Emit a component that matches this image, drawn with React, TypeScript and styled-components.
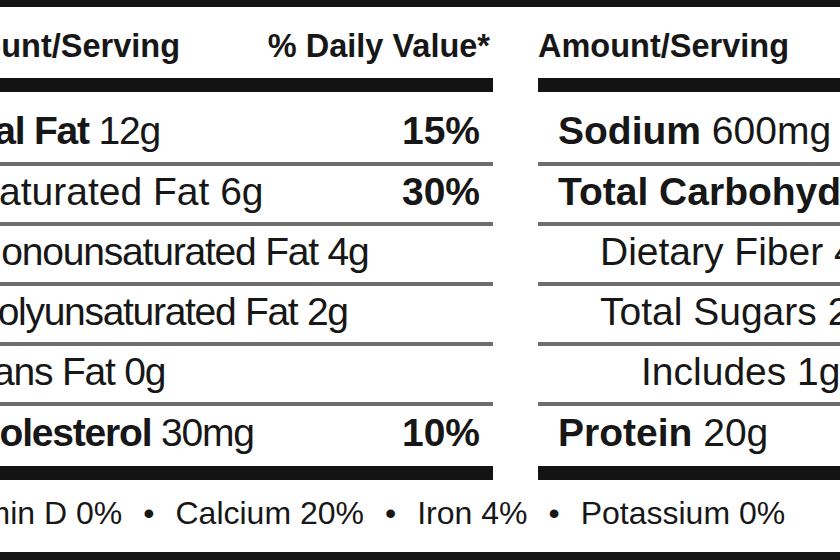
import React from "react";
import styled, { createGlobalStyle } from "styled-components";

const GlobalStyle = createGlobalStyle`
  html, body {
    margin: 0;
    padding: 0;
    background: #ffffff;
  }
  body {
    font-family: "Liberation Sans", Arial, Helvetica, sans-serif;
    color: #171717;
  }
`;

const Page = styled.div`
  width: 840px;
  height: 560px;
  overflow: hidden;
  background: #ffffff;
`;

const Label = styled.div`
  margin-left: -71px;
  width: 1173px;
  border-top: 7px solid #151515;
  border-bottom: 8px solid #151515;
`;

const Columns = styled.div`
  display: grid;
  grid-template-columns: 564px 564px;
  column-gap: 45px;
`;

const Column = styled.section`
  display: flex;
  flex-direction: column;
`;

const HeaderRow = styled.div`
  display: flex;
  justify-content: space-between;
  align-items: flex-start;
  box-sizing: border-box;
  height: 71px;
  padding: 23px 3px 0 0;
  font-size: 32.5px;
  line-height: 32px;
  font-weight: 700;
  white-space: nowrap;
`;

const ThickRule = styled.div`
  height: 14px;
  background: #131313;
`;

type Pos = "first" | "middle" | "last";

const Row = styled.div<{ $indent: number; $pos: Pos }>`
  display: flex;
  justify-content: space-between;
  align-items: flex-start;
  box-sizing: border-box;
  white-space: nowrap;
  font-size: 39px;
  line-height: 39px;
  padding-left: ${(p) => p.$indent}px;
  padding-right: 13px;
  height: ${(p) => (p.$pos === "first" ? 74 : 60)}px;
  padding-top: ${(p) => (p.$pos === "first" ? 19 : p.$pos === "last" ? 7 : 6)}px;
  border-bottom: ${(p) => (p.$pos === "last" ? "none" : "4px solid #6e6e6e")};
`;

const Label_ = styled.span<{ $tracking: number }>`
  letter-spacing: ${(p) => p.$tracking}px;
`;

const Name = styled.span<{ $bold?: boolean }>`
  font-weight: ${(p) => (p.$bold ? 700 : 400)};
`;

const Amount = styled.span`
  font-weight: 400;
`;

const Percent = styled.span`
  font-weight: 700;
`;

const VitaminRow = styled.div`
  display: flex;
  align-items: flex-start;
  box-sizing: border-box;
  height: 72px;
  padding-top: 17px;
  font-size: 32px;
  line-height: 32px;
  white-space: nowrap;
`;

const Bullet = styled.span`
  margin: 0 21px;
`;

type Item = {
  name: string;
  bold?: boolean;
  amount: string;
  dv?: string;
  indent: number;
  tracking?: number;
};

const leftItems: Item[] = [
  { name: "Total Fat", bold: true, amount: "12g", dv: "15%", indent: 11, tracking: -1.2 },
  { name: "Saturated Fat", amount: "6g", dv: "30%", indent: 44 },
  { name: "Monounsaturated Fat", amount: "4g", indent: 41, tracking: -1.2 },
  { name: "Polyunsaturated Fat", amount: "2g", indent: 44, tracking: -1.3 },
  { name: "Trans Fat", amount: "0g", indent: 31, tracking: -1.2 },
  { name: "Cholesterol", bold: true, amount: "30mg", dv: "10%", indent: 21, tracking: -1.2 },
];

const rightItems: Item[] = [
  { name: "Sodium", bold: true, amount: "600mg", dv: "26%", indent: 20 },
  { name: "Total Carbohydrate", bold: true, amount: "15g", dv: "5%", indent: 20 },
  { name: "Dietary Fiber", amount: "4g", dv: "14%", indent: 62 },
  { name: "Total Sugars", amount: "2g", indent: 62 },
  { name: "Includes", amount: "1g Added Sugars", dv: "2%", indent: 103 },
  { name: "Protein", bold: true, amount: "20g", indent: 20 },
];

const vitamins = ["Vitamin D 0%", "Calcium 20%", "Iron 4%", "Potassium 0%"];

function NutrientColumn({ items }: { items: Item[] }) {
  return (
    <Column>
      <HeaderRow>
        <span>Amount/Serving</span>
        <span>% Daily Value*</span>
      </HeaderRow>
      <ThickRule />
      {items.map((it, i) => (
        <Row
          key={it.name}
          $indent={it.indent}
          $pos={i === 0 ? "first" : i === items.length - 1 ? "last" : "middle"}
        >
          <Label_ $tracking={it.tracking ?? 0}>
            <Name $bold={it.bold}>{it.name}</Name> <Amount>{it.amount}</Amount>
          </Label_>
          {it.dv ? <Percent>{it.dv}</Percent> : null}
        </Row>
      ))}
      <ThickRule />
    </Column>
  );
}

export default function App() {
  return (
    <>
      <GlobalStyle />
      <Page>
        <Label>
          <Columns>
            <NutrientColumn items={leftItems} />
            <NutrientColumn items={rightItems} />
          </Columns>
          <VitaminRow>
            {vitamins.map((v, i) => (
              <React.Fragment key={v}>
                {i > 0 ? <Bullet>•</Bullet> : null}
                <span>{v}</span>
              </React.Fragment>
            ))}
          </VitaminRow>
        </Label>
      </Page>
    </>
  );
}
